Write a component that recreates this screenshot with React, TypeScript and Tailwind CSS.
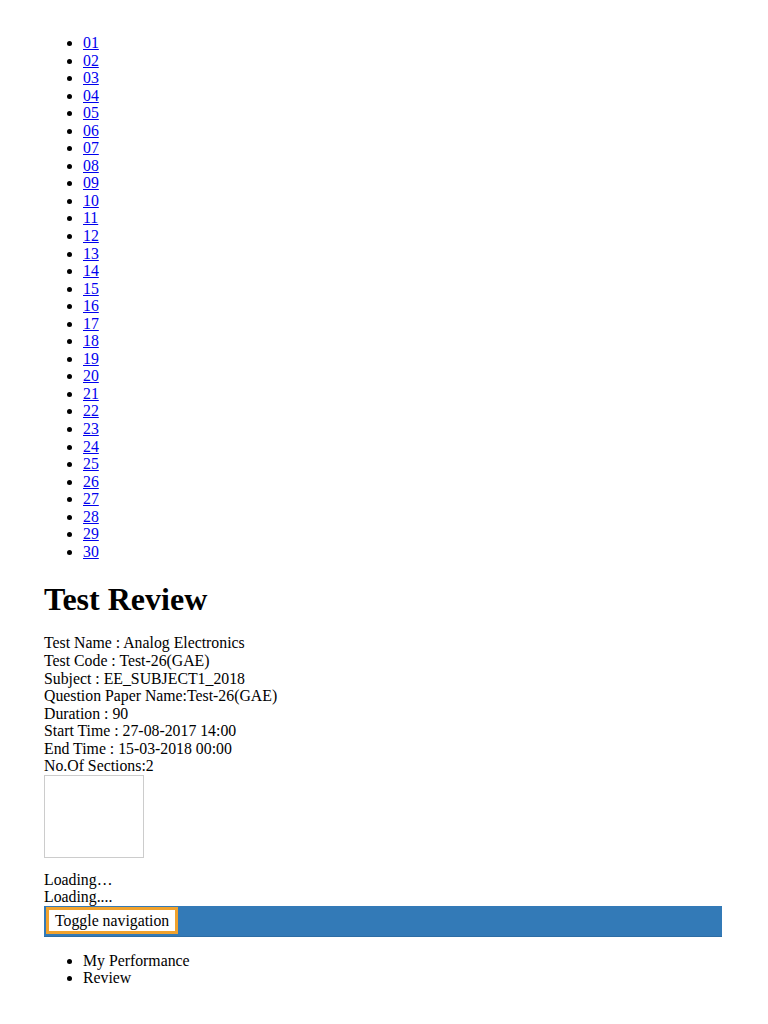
import React from 'react'

const nums = Array.from({ length: 30 }, (_, i) => String(i + 1).padStart(2, '0'))

const info = [
  'Test Name : Analog Electronics',
  'Test Code : Test-26(GAE)',
  'Subject : EE_SUBJECT1_2018',
  'Question Paper Name:Test-26(GAE)',
  'Duration : 90',
  'Start Time : 27-08-2017 14:00',
  'End Time : 15-03-2018 00:00',
  'No.Of Sections:2',
]

export default function App() {
  return (
    <div className="min-h-[1024px] bg-white px-[44px] pt-[34px] text-[15.8px] leading-[17.55px] text-black [font-family:'Liberation_Serif',serif]">
      <ul className="list-disc pl-[39px]">
        {nums.map((n) => (
          <li key={n}>
            <a href="#" className="text-[#0000ee] underline">
              {n}
            </a>
          </li>
        ))}
      </ul>

      <h1 className="mt-[22px] mb-[17px] text-[32px] font-bold leading-[35px]">Test Review</h1>

      <div>
        {info.map((line) => (
          <div key={line}>{line}</div>
        ))}
      </div>

      <div className="h-[83px] w-[100px] border border-[#cccccc]" />

      <div className="mt-[13px]">Loading…</div>
      <div>Loading....</div>

      <div className="flex h-[31px] w-[678px] items-center border-b border-[#2e6da4] bg-[#337ab7] pl-[2px]">
        <button className="h-[27px] border-[3px] border-[#f0a22e] bg-white px-[6px] leading-[17px]">
          Toggle navigation
        </button>
      </div>

      <ul className="mt-[15px] list-disc pl-[39px]">
        <li>My Performance</li>
        <li>Review</li>
      </ul>
    </div>
  )
}
